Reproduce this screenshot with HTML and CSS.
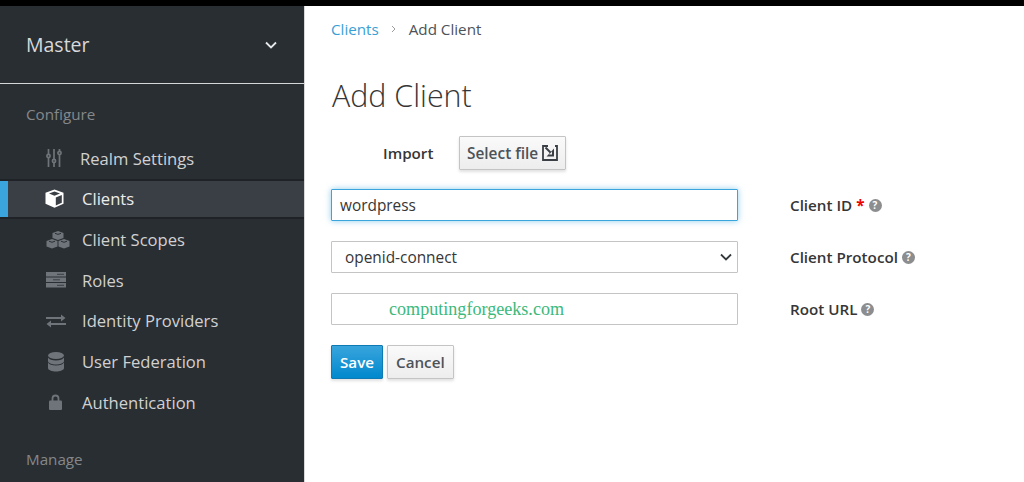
FILE: index.html
```html
<!DOCTYPE html>
<html lang="en">
<head>
<meta charset="utf-8">
<title>Add Client</title>
<link rel="stylesheet" href="styles.css">
</head>
<body>
<div class="topbar"></div>
<div class="shell">
  <aside class="sidebar">
    <div class="realm">
      <span>Master</span>
      <svg class="realm-chev" viewBox="0 0 12 8" width="12" height="8"><path d="M1 1.500l5 5 5-5" fill="none" stroke="#e6e8ea" stroke-width="1.800"/></svg>
    </div>
    <div class="section">Configure</div>
    <nav class="nav">
      <a class="item item-first">
        <svg class="ico" viewBox="0 0 16 18" width="16" height="18"><g fill="none" stroke="#6f747a" stroke-width="1.700"><path d="M2.500 0v5M2.500 9v9M8 0v10M8 14v4M13.500 0v2M13.500 6v12"/><circle cx="2.500" cy="7" r="1.600"/><circle cx="8" cy="12" r="1.600"/><circle cx="13.500" cy="4" r="1.600"/></g></svg>
        <span>Realm Settings</span>
      </a>
      <a class="item active">
        <svg class="ico ico-cube" viewBox="0 0 19 19" width="19" height="19"><path d="M9.500 0.500l9 3.300v11l-9 3.900-9-3.900v-11z" fill="#fff"/><path d="M9.500 2.500l5.500 2-5.500 2.200-5.500-2.200z" fill="#3a3f45"/><path d="M10.800 8.500l6-2.400v7.700l-6 2.600z" fill="#3a3f45"/></svg>
        <span>Clients</span>
      </a>
      <a class="item">
        <svg class="ico" viewBox="0 0 24 18" width="24" height="18"><g fill="#6f747a"><path d="M12 0l5.500 2v5l-5.500 2-5.500-2v-5z"/><path d="M6 8l5.500 2v5.500l-5.500 2-5.500-2v-5.500z"/><path d="M18 8l5.500 2v5.500l-5.500 2-5.500-2v-5.500z"/></g><path d="M9 2.300l3 1.100 3-1.100M3 10.200l3 1.100 3-1.100M15 10.200l3 1.100 3-1.100" fill="none" stroke="#292e33" stroke-width="1"/></svg>
        <span>Client Scopes</span>
      </a>
      <a class="item">
        <svg class="ico" viewBox="0 0 20 16" width="20" height="16"><path d="M0 0h20v4.500h-20zM0 5.500h20v4.500h-20zM0 11h20v4.500h-20z" fill="#6f747a"/><path d="M11 2.300h7M7 7.800h7M11 13.300h7" stroke="#3a3f45" stroke-width="1"/></svg>
        <span>Roles</span>
      </a>
      <a class="item">
        <svg class="ico" viewBox="0 0 20 14" width="20" height="14"><path d="M0 4h16M20 10h-16" stroke="#6f747a" stroke-width="2"/><path d="M15 0.500l4.500 3.500-4.500 3.500zM5 6.500l-4.500 3.500 4.500 3.500z" fill="#6f747a"/></svg>
        <span>Identity Providers</span>
      </a>
      <a class="item">
        <svg class="ico ico-db" viewBox="0 0 16 20" width="16" height="20"><g fill="#6f747a"><ellipse cx="8" cy="3.500" rx="8" ry="3.500"/><path d="M0 5.500c1 2 4 3 8 3s7-1 8-3v3.500c0 2-4 3.500-8 3.500s-8-1.500-8-3.500z"/><path d="M0 10.500c1 2 4 3 8 3s7-1 8-3v5.500c0 2-4 3.500-8 3.500s-8-1.500-8-3.500z"/></g></svg>
        <span>User Federation</span>
      </a>
      <a class="item">
        <svg class="ico ico-lock" viewBox="0 0 13 16" width="13" height="16"><path d="M3.500 7v-2.500a3 3 0 0 1 6 0v2.500" fill="none" stroke="#6f747a" stroke-width="1.800"/><rect x="0" y="6.500" width="13" height="9.500" rx="1" fill="#6f747a"/></svg>
        <span>Authentication</span>
      </a>
    </nav>
    <div class="section section-manage">Manage</div>
  </aside>
  <main class="content">
    <div class="crumbs">
      <a class="crumb-link">Clients</a>
      <svg class="crumb-sep" viewBox="0 0 5 8" width="5" height="8"><path d="M1 1l3 3-3 3" fill="none" stroke="#9c9c9c" stroke-width="1"/></svg>
      <span>Add Client</span>
    </div>
    <h1 class="title">Add Client</h1>
    <div class="import-row">
      <span class="import-label">Import</span>
      <button class="btn btn-file" type="button">Select file
        <svg class="file-ico" viewBox="0 0 16 16" width="16" height="16"><path d="M6 1h-5v14h14v-14h-2" fill="none" stroke="#393f44" stroke-width="1.800"/><path d="M3.500 2.500l7 7" fill="none" stroke="#393f44" stroke-width="2"/><path d="M12 3.500v8h-7.500z" fill="#393f44"/><path d="M10 6.500v3h-3z" fill="#f3f3f3"/></svg>
      </button>
    </div>
    <form class="fields">
      <input class="field focus" type="text" value="wordpress">
      <div class="label">Client ID <span class="req">*</span> <i class="help">?</i></div>
      <div class="field select"><span>openid-connect</span>
        <svg viewBox="0 0 12 8" width="12" height="8"><path d="M1 1.500l5 5 5-5" fill="none" stroke="#33383d" stroke-width="1.800"/></svg>
      </div>
      <div class="label">Client Protocol <i class="help">?</i></div>
      <div class="field url"><span class="mark">computingforgeeks.com</span></div>
      <div class="label">Root URL <i class="help">?</i></div>
    </form>
    <div class="actions">
      <button class="btn btn-primary" type="button">Save</button>
      <button class="btn" type="button">Cancel</button>
    </div>
  </main>
</div>
</body>
</html>
```

FILE: styles.css
```css
* { box-sizing: border-box; }
html, body { margin: 0; height: 100%; overflow: hidden; }
body { font-family: "Open Sans", sans-serif; font-size: 16.6px; color: #363636; background: #fff; }
.topbar { height: 6px; background: #000; }
.shell { display: flex; height: 476px; }
.sidebar { width: 305px; flex: none; background: #292e33; color: #d1d1d1; border-right: 1px solid #d8d8d8; overflow: hidden; }
.realm { height: 78px; display: flex; align-items: center; justify-content: space-between; padding: 0 27px 0 26px; font-size: 19.5px; color: #d8d9da; border-bottom: 1px solid #d5d6d7; }
.section { color: #85888b; font-size: 15.2px; line-height: 20px; padding-left: 26px; margin-top: 20px; }
.section-manage { margin-top: 26px; }
.nav { margin-top: 14px; }
.item { display: flex; align-items: center; height: 40.67px; padding-left: 46px; position: relative; }
.item span { position: absolute; left: 82px; }
.item-first span { left: 80px; }
.ico { flex: none; }
.ico-cube { margin-left: -1px; }
.ico-db { margin-left: 2px; }
.ico-lock { margin-left: 3px; }
.active { background: #3a3f45; color: #ececec; border-top: 2px solid #1f2327; border-bottom: 2px solid #1f2327; box-shadow: inset 8px 0 0 #39a5dc; }
.content { flex: 1; padding: 0 0 0 26px; }
.crumbs { display: flex; align-items: center; gap: 12.5px; height: 20px; margin-top: 13px; font-size: 15.2px; color: #4d5258; }
.crumb-link { color: #39a0d5; }
.title { font-size: 30.4px; font-weight: 300; color: #363636; line-height: 40px; margin: 37px 0 0 1px; }
.import-row { display: flex; align-items: center; margin-top: 20px; height: 34px; }
.import-label { width: 128px; padding-left: 52px; font-weight: 600; font-size: 15.2px; color: #363636; }
.btn { font-family: inherit; font-size: 15.2px; font-weight: 600; color: #4d5258; height: 34px; padding: 0 8px; border: 1px solid #c4c4c4; border-radius: 1px; background: linear-gradient(#fafafa, #ededed); box-shadow: 0 2px 3px rgba(0, 0, 0, .12); }
.btn-file { display: inline-flex; align-items: center; gap: 4px; width: 107px; padding: 0 7px; font-size: 15.4px; white-space: nowrap; }
.file-ico { flex: none; }
.fields { display: grid; grid-template-columns: 407px auto; column-gap: 52px; row-gap: 20px; margin-top: 19px; width: 660px; }
.field { height: 32px; width: 407px; border: 1px solid #c4c4c4; border-radius: 1px; background: #fff; font-family: inherit; font-size: 15.4px; color: #363636; padding: 0 8px; }
.focus { border-color: #39a5dc; outline: none; box-shadow: 0 0 6px rgba(57, 165, 220, .55); }
.select { display: flex; align-items: center; justify-content: space-between; padding: 0 5px 0 13px; }
.url { display: flex; align-items: center; padding-left: 57px; }
.mark { font-family: "Liberation Serif", serif; font-size: 18.1px; color: #3cb97d; }
.label { display: flex; align-items: center; gap: 4px; font-size: 15.2px; font-weight: 600; color: #363636; }
.req { color: #e00; font-weight: 700; }
.help { display: inline-flex; align-items: center; justify-content: center; width: 13px; height: 13px; border-radius: 50%; background: #8b8d8f; color: #fff; font-size: 10px; font-style: normal; font-weight: 700; }
.actions { display: flex; gap: 4px; margin-top: 20px; }
.btn-primary { width: 52px; padding: 0; color: #fff; border-color: #0d7ab4; background: linear-gradient(#39a5dc, #0088ce); }
```
